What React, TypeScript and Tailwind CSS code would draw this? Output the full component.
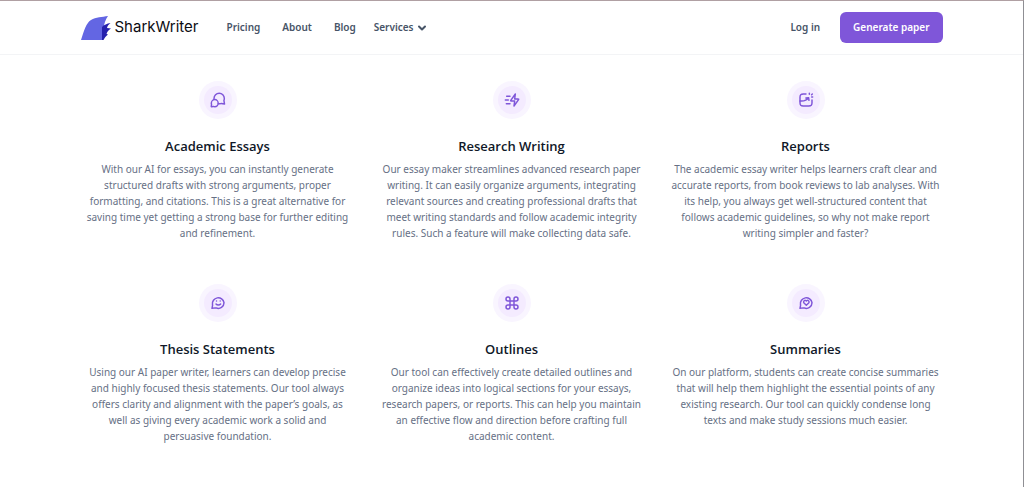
import React from 'react';
import { ChevronDown } from 'lucide-react';

interface Feature {
  title: string;
  text: string;
  icon: React.ReactNode;
}

const features: Feature[] = [
  {
    title: 'Academic Essays',
    text: 'With our AI for essays, you can instantly generate structured drafts with strong arguments, proper formatting, and citations. This is a great alternative for saving time yet getting a strong base for further editing and refinement.',
    icon: (
      <>
        <path d="M6.1 11A7.6 7.6 0 0 1 6 9.7C6 5.4 9.500 2 13.800 2s7.700 3.400 7.700 7.700c0 1-.2 1.900-.5 2.700-.1.4-.1.5-.1.7l.9 5-5-.8c-.3 0-.4 0-.7.1-.8.2-1.600.3-2.400.3-.5 0-.9 0-1.300-.1" />
        <path d="M7.2 22C10 22 12.300 19.600 12.300 16.700S10 11.400 7.200 11.400 2 13.800 2 16.700c0 .6.1 1.100.3 1.700L1.900 22l3.300-.4c.7.3 1.300.4 2 .4z" />
      </>
    ),
  },
  {
    title: 'Research Writing',
    text: 'Our essay maker streamlines advanced research paper writing. It can easily organize arguments, integrating relevant sources and creating professional drafts that meet writing standards and follow academic integrity rules. Such a feature will make collecting data safe.',
    icon: (
      <path d="M9 17.5H3.500M6.500 12H2M9 6.500H4M17 3l-6.600 9.200c-.3.400-.4.600-.4.800 0 .1.100.3.200.4.200.1.400.1.900.1H16l-1 7.500 6.600-9.200c.3-.4.4-.6.4-.8 0-.1-.1-.3-.2-.4-.2-.1-.4-.1-.9-.1H16L17 3z" />
    ),
  },
  {
    title: 'Reports',
    text: 'The academic essay writer helps learners craft clear and accurate reports, from book reviews to lab analyses. With its help, you always get well-structured content that follows academic guidelines, so why not make report writing simpler and faster?',
    icon: (
      <>
        <path d="M17 3.500V2M20.400 4.100L21.500 3M20.500 7.500H22M21 12v4.200c0 3.800-1 4.800-4.800 4.800H7.800C4 21 3 20 3 16.200V7.800C3 4 4 3 7.800 3H12" />
        <path d="M3 13.500c6 .6 10.200-1 12.900-5M16.500 12.500l-.6-4-4 .6" />
      </>
    ),
  },
  {
    title: 'Thesis Statements',
    text: 'Using our AI paper writer, learners can develop precise and highly focused thesis statements. Our tool always offers clarity and alignment with the paper’s goals, as well as giving every academic work a solid and persuasive foundation.',
    icon: (
      <>
        <path d="M21 11.500a8.500 8.500 0 0 1-11.700 7.900c-.3-.1-.5-.1-.8-.1L3 20l.9-4.700c0-.3 0-.5-.2-.9A8.500 8.500 0 1 1 21 11.500z" />
        <path d="M9 13.500s1.300 1.500 3.500 1.500 3.500-1.500 3.500-1.500M15.300 9h0M9.800 9h0" />
      </>
    ),
  },
  {
    title: 'Outlines',
    text: 'Our tool can effectively create detailed outlines and organize ideas into logical sections for your essays, research papers, or reports. This can help you maintain an effective flow and direction before crafting full academic content.',
    icon: (
      <path d="M9 9V6a3 3 0 1 0-3 3h3zm0 0v6m0-6h6m-6 6v3a3 3 0 1 1-3-3h3zm0 0h6m0 0h3a3 3 0 1 1-3 3v-3zm0 0V9m0 0V6a3 3 0 1 1 3 3h-3z" />
    ),
  },
  {
    title: 'Summaries',
    text: 'On our platform, students can create concise summaries that will help them highlight the essential points of any existing research. Our tool can quickly condense long texts and make study sessions much easier.',
    icon: (
      <>
        <path d="M21 11.500a8.500 8.500 0 0 1-11.700 7.900c-.3-.1-.5-.1-.8-.1L3 20l.9-4.700c0-.3 0-.5-.2-.9A8.500 8.500 0 1 1 21 11.500z" />
        <path d="M12.500 8.900c-.8-1-2.200-1.200-3.200-.3s-1.200 2.400-.3 3.400l3.500 3.300L16 12c.9-1 .7-2.500-.3-3.400s-2.400-.7-3.200.3z" />
      </>
    ),
  },
];

const Logo: React.FC = () => (
  <a href="#" className="flex items-center gap-1 font-['Inter',sans-serif] text-[15px] font-normal text-[#0c0c12]">
    <svg width="30" height="26" viewBox="0 0 30 26" aria-hidden="true">
      <path d="M0 25C3 16 5 8 10 5C15 2 21 2 27 1C24.500 5 23 8 23 13L21.500 25Z" fill="#6366e3" />
      <path d="M21 12C23 10 26 8.500 29.500 8C27.500 9.500 26.500 11 26 13L30 13.500C27.500 15 26 17 25.500 19L27 19.500C25 21 23.500 23 22.500 25H21Z" fill="#2621ad" />
    </svg>
    SharkWriter
  </a>
);

const Header: React.FC = () => (
  <header className="border-b border-[#f3f4f6]">
    <div className="mx-auto flex h-[53px] max-w-[862px] items-center justify-between text-[10px] font-semibold text-[#475467]">
      <div className="flex items-center gap-7">
        <Logo />
        <nav className="flex items-center gap-[22px]">
          <a href="#">Pricing</a>
          <a href="#">About</a>
          <a href="#">Blog</a>
          <button className="-ml-1 flex items-center gap-0.5">
            Services
            <ChevronDown size={12} strokeWidth={4} />
          </button>
        </nav>
      </div>
      <div className="flex items-center gap-5">
        <a href="#">Log in</a>
        <button className="rounded-md bg-[#7f56d9] px-[13px] py-[7px] leading-[17px] text-white">Generate paper</button>
      </div>
    </div>
  </header>
);

const FeatureCard: React.FC<{ feature: Feature }> = ({ feature }) => (
  <article className="flex flex-col items-center px-0.5 text-center">
    <div className="flex size-[38px] items-center justify-center rounded-full bg-[#f9f5ff]">
      <div className="flex size-7 items-center justify-center rounded-full bg-[#f4ebff]">
        <svg
          width="16"
          height="16"
          viewBox="0 0 24 24"
          fill="none"
          stroke="#7f56d9"
          strokeWidth="2.2"
          strokeLinecap="round"
          strokeLinejoin="round"
          aria-hidden="true"
        >
          {feature.icon}
        </svg>
      </div>
    </div>
    <h3 className="mt-4 font-['Open_Sans','Noto_Sans',sans-serif] text-[13px] leading-[22px] font-semibold text-[#101828]">
      {feature.title}
    </h3>
    <p className="mt-1 text-[10px] leading-4 text-[#667085]">{feature.text}</p>
  </article>
);

export default function App() {
  return (
    <div className="min-h-screen border-t border-r border-t-[#b0a0a3] border-r-[#8f8f94] bg-white font-['Noto_Sans','Open_Sans',sans-serif]">
      <Header />
      <main className="mx-auto grid max-w-[862px] grid-cols-3 gap-x-5 gap-y-[43px] pt-[26px] pb-10">
        {features.map(feature => (
          <FeatureCard key={feature.title} feature={feature} />
        ))}
      </main>
    </div>
  );
}
